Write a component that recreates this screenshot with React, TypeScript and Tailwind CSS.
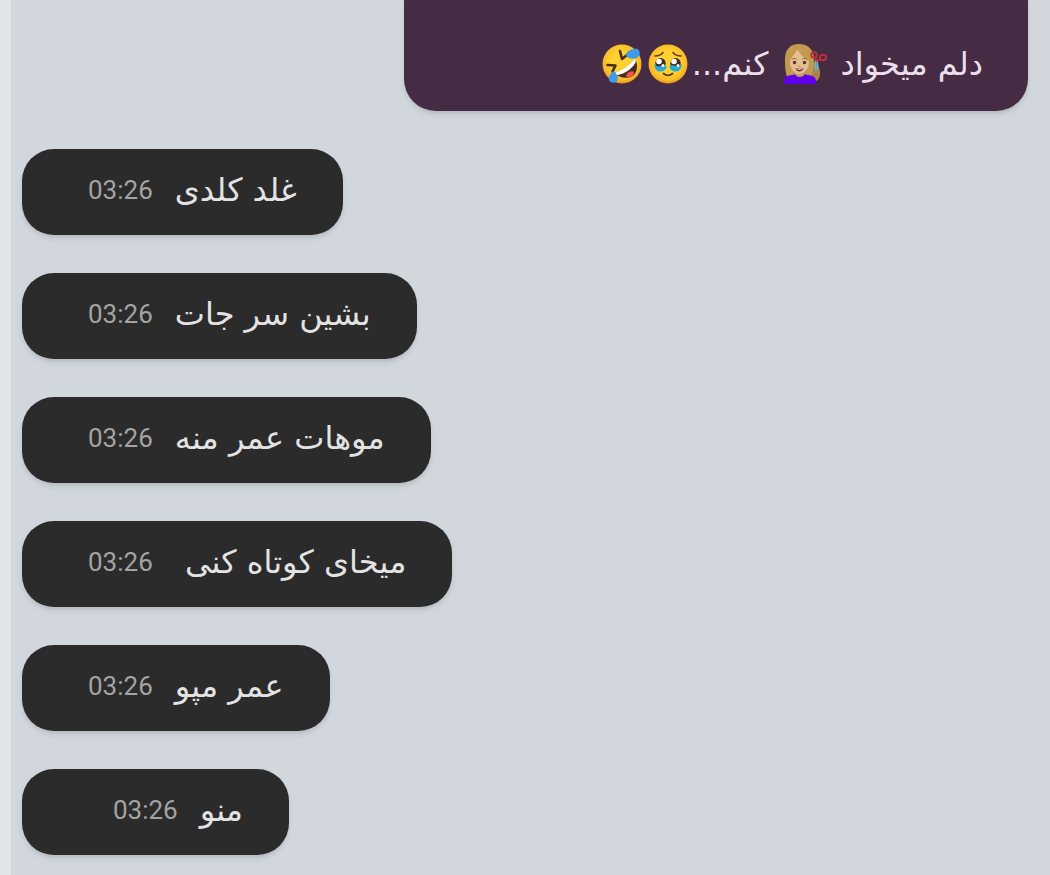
import type { ReactNode } from 'react';

type Message = {
  id: number;
  text: string;
  time: string;
};

const messages: Message[] = [
  { id: 1, text: 'غلد کلدی', time: '03:26' },
  { id: 2, text: 'بشین سر جات', time: '03:26' },
  { id: 3, text: 'موهات عمر منه', time: '03:26' },
  { id: 4, text: 'میخای کوتاه کنی ', time: '03:26' },
  { id: 5, text: 'عمر مپو', time: '03:26' },
  { id: 6, text: 'منو', time: '03:26' },
];

function Emoji({ label, children }: { label: string; children: ReactNode }) {
  return (
    <svg viewBox="0 0 40 40" role="img" aria-label={label} className="h-10 w-10 shrink-0 overflow-visible">
      {children}
    </svg>
  );
}

function FaceGradient({ id }: { id: string }) {
  return (
    <defs>
      <radialGradient id={id} cx="50%" cy="45%" r="54%">
        <stop offset="0.5" stopColor="#fdd22f" />
        <stop offset="0.85" stopColor="#f9bd29" />
        <stop offset="1" stopColor="#e89a20" />
      </radialGradient>
    </defs>
  );
}

function HaircutEmoji() {
  return (
    <Emoji label="haircut">
      <path d="M25 16c8 2 12 8 11 15-1 6-6 8-10 7z" fill="#a98344" />
      <path d="M15 0C6 0 1 6 1 15c0 8 0 13 3 20h22c3-6 4-12 4-20C30 6 24 0 15 0z" fill="#c29a50" />
      <path d="M11 26h9v8c-2 3-7 3-9 0z" fill="#c99b6e" />
      <path d="M0 40v-3c0-4 4-6 9-6l2-1c1 4 8 4 10 0l2 1c5 0 9 2 9 6v3z" fill="#6200ea" />
      <path d="M15 6c-6 0-9 5-9 12 0 8 5 12 9 12s10-4 10-12c0-7-4-12-10-12z" fill="#e6bd91" />
      <path d="M13 4c-1 6-5 8-8 14-1-8 1-15 9-16 9-1 13 6 12 16C21 15 16 11 13 4z" fill="#c29a50" />
      <circle cx="10.5" cy="18.5" r="1.7" fill="#49362e" />
      <circle cx="20.5" cy="18.5" r="1.7" fill="#49362e" />
      <path d="M8 15.5c1-1.500 3-1.500 4.500-.5M18.500 15c1.500-1 3.500-1 4.500.5" fill="none" stroke="#8c6638" strokeWidth="1" strokeLinecap="round" />
      <path d="M14 22h3l-1.500 1z" fill="#b97d52" />
      <path d="M11.500 24.500h8c-1 4-7 4-8 0z" fill="#6d3029" />
      <path d="M12.500 24.800h6c-1 1.200-5 1.200-6 0z" fill="#fff" />
      <path d="M31 16l3 1 .5 7-3 5-1-7z" fill="#79b8ca" />
      <path d="M33 15l-1 13" stroke="#4f91a8" strokeWidth="0.8" />
      <circle cx="30" cy="11" r="2.800" fill="none" stroke="#b8323c" strokeWidth="2" />
      <ellipse cx="39" cy="13.500" rx="3.200" ry="2.700" fill="none" stroke="#b8323c" strokeWidth="2" />
      <path d="M31 14l2 3 3-2" fill="none" stroke="#b8323c" strokeWidth="1.800" />
    </Emoji>
  );
}

function HoldingTearsEmoji() {
  return (
    <Emoji label="face holding back tears">
      <FaceGradient id="tears-face" />
      <circle cx="20" cy="20" r="19.500" fill="url(#tears-face)" />
      <path d="M7 12c4 0 6-1 8-3.500M33 12c-4 0-6-1-8-3.500" fill="none" stroke="#5f3d1c" strokeWidth="1.600" strokeLinecap="round" />
      <ellipse cx="12.500" cy="19.500" rx="5.200" ry="5.500" fill="#3f2b20" />
      <ellipse cx="27.500" cy="19.500" rx="5.200" ry="5.500" fill="#3f2b20" />
      <path d="M6.500 20c2 2 4 3 6 2s4-1 6 0c0 4-3 5.500-6.500 5.500S6 24 6.500 20zM33.500 20c-2 2-4 3-6 2s-4-1-6 0c0 4 3 5.500 6.500 5.500S34 24 33.500 20z" fill="#29a9d6" />
      <circle cx="11" cy="17.500" r="2.800" fill="#fff" />
      <circle cx="26" cy="17.500" r="2.800" fill="#fff" />
      <circle cx="15" cy="21.500" r="1.500" fill="#fff" />
      <circle cx="30" cy="21.500" r="1.500" fill="#fff" />
      <path d="M15.500 29.500c2.500 2.500 6.500 2.500 9 0" fill="none" stroke="#5f3d1c" strokeWidth="1.800" strokeLinecap="round" />
    </Emoji>
  );
}

function RollingEmoji() {
  return (
    <Emoji label="rolling on the floor laughing">
      <FaceGradient id="rolling-face" />
      <circle cx="20" cy="20" r="19.500" fill="url(#rolling-face)" />
      <path d="M33 15c4 7 2 15-4 18-6 2-13 0-17-4C20 27 28 22 33 15z" fill="#4e2b20" />
      <path d="M24 32c1-4 6-6 8-4 0 2-1 4-3 5-2 .8-4 0-5-1z" fill="#ef5350" />
      <path d="M33 14.500c1 2 1 3.500 0 5-4 6-10 10-17 11.500-2 0-3-.5-4.500-2C20 27 28 21 33 14.500z" fill="#fff" />
      <path d="M18 7l2 8 5-4M5.500 21l8 .5-3 6" fill="none" stroke="#4e2b20" strokeWidth="2.600" strokeLinecap="round" strokeLinejoin="round" />
      <path d="M24 12c0-5 5-7 9-7 4-1 6 4 4 7-3 4-10 3-13 0z" fill="#3d9be8" />
      <path d="M12 27c3 3 5 7 3 10-2 3-7 2-8-1-1-4 2-7 5-9z" fill="#3d9be8" />
    </Emoji>
  );
}

function IncomingMessage({ message }: { message: Message }) {
  return (
    <li
      dir="rtl"
      className="flex h-[86px] w-fit min-w-[267px] items-center gap-[22px] rounded-[32px] bg-[#2b2b2b] pr-[46px] pb-1 pl-[66px] shadow-md"
    >
      <p className="text-[32px] leading-10 whitespace-pre text-[#e3e3e3]">{message.text}</p>
      <time className="font-[Roboto,sans-serif] text-[26px] leading-8 text-[#a3a3a3]">{message.time}</time>
    </li>
  );
}

export default function App() {
  return (
    <main className="min-h-screen border-l-[11px] border-[#e1e5ea] bg-[#d2d7de] pr-[22px] pb-4 pl-[11px] font-['DejaVu_Sans',sans-serif]">
      <section
        dir="rtl"
        className="ml-0 mr-auto flex w-full justify-start"
      >
        <div className="flex w-[624px] max-w-full items-center rounded-b-[32px] bg-[#452b43] px-[45px] pt-11 pb-[27px] text-[32px] leading-10 whitespace-nowrap text-[#eadfea] shadow-md">
          <p className="flex items-center gap-4">
            <span>دلم میخواد</span>
            <HaircutEmoji />
            <span>کنم...</span>
          </p>
          <span className="mr-1 flex gap-[6px]">
            <HoldingTearsEmoji />
            <RollingEmoji />
          </span>
        </div>
      </section>

      <ul className="mt-[38px] flex flex-col items-start gap-[38px]">
        {messages.map((message) => (
          <IncomingMessage key={message.id} message={message} />
        ))}
      </ul>
    </main>
  );
}
